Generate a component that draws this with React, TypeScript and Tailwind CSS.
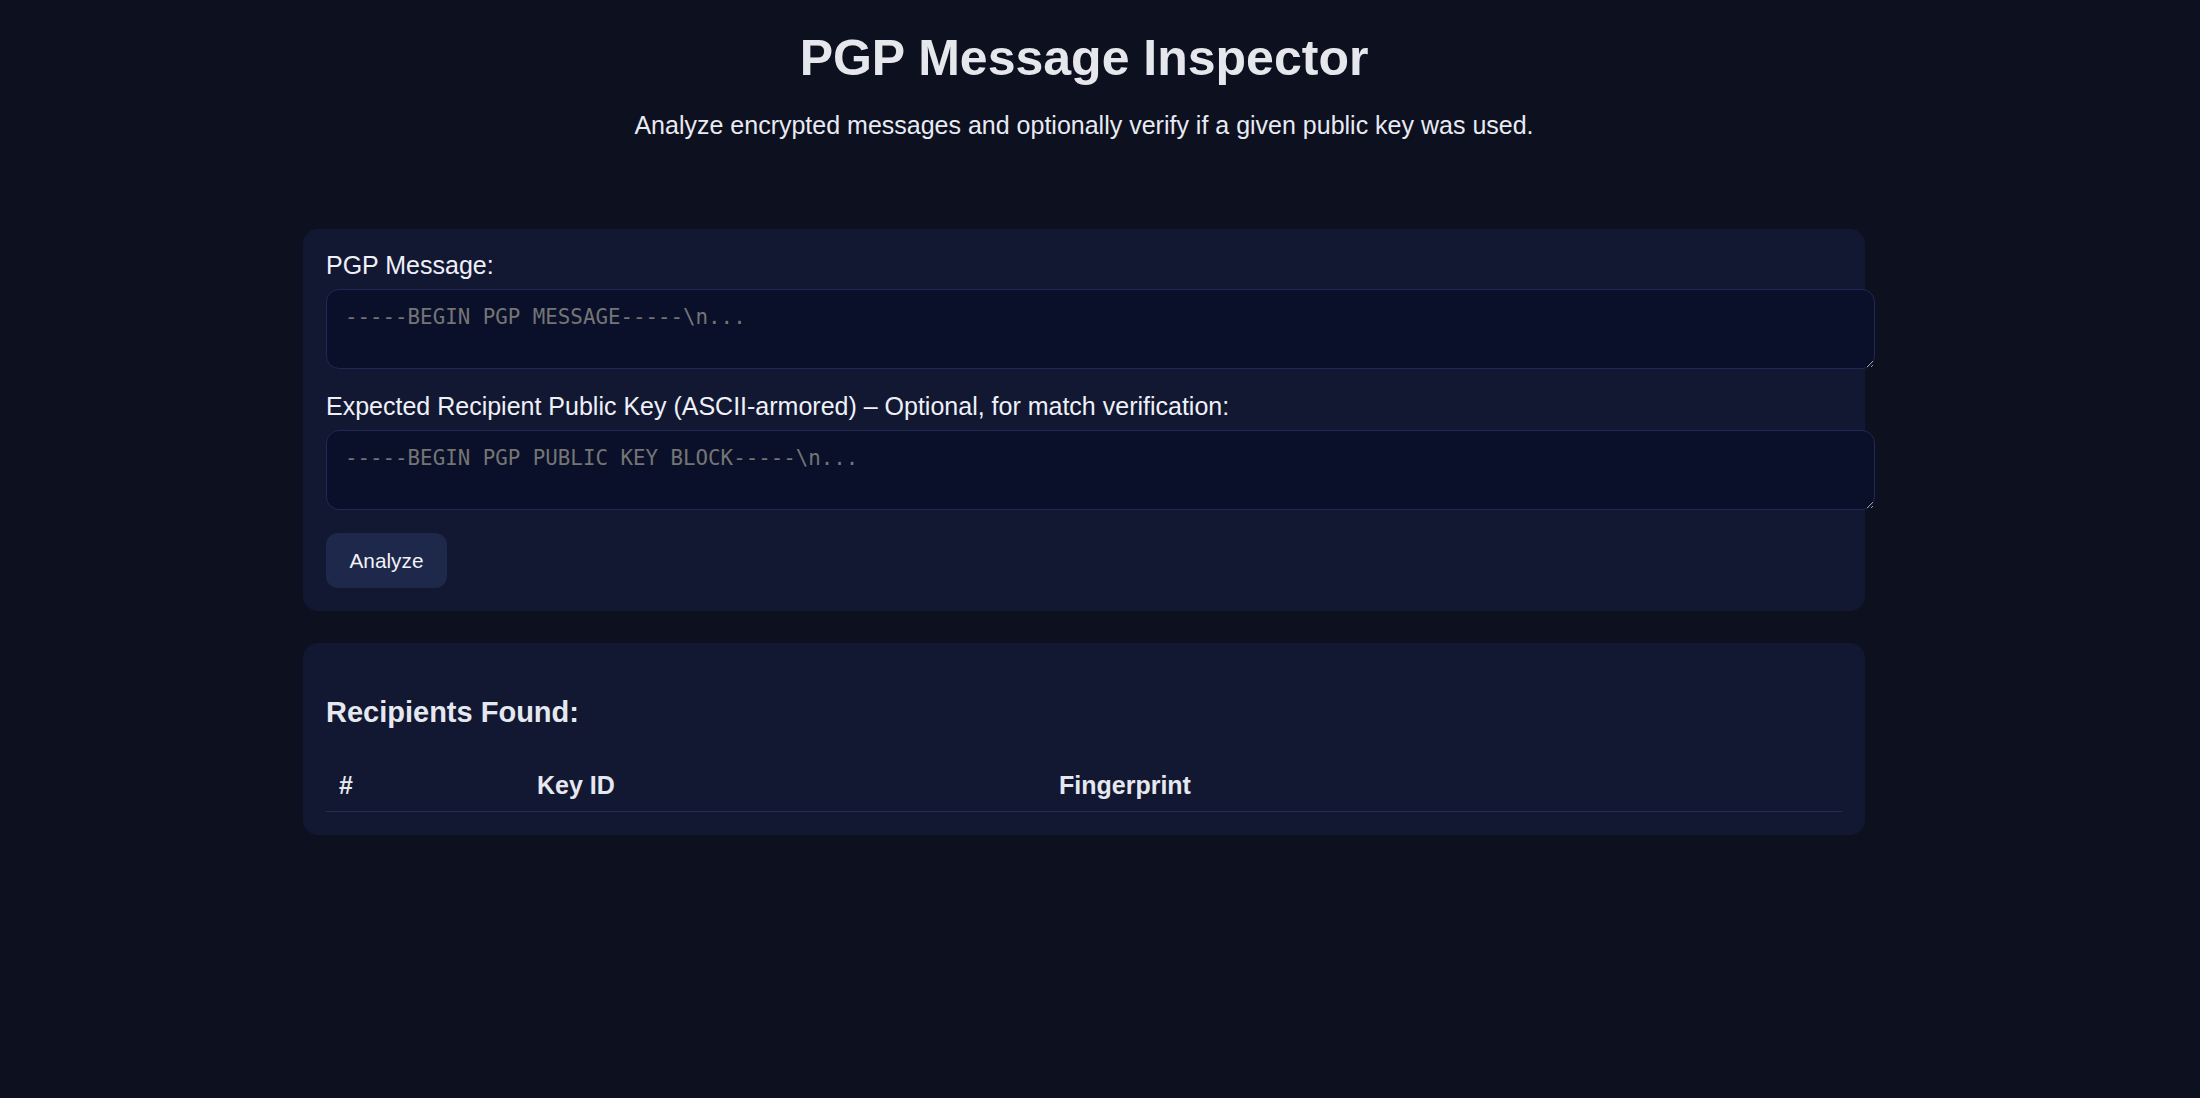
import React from "react";

export default function App() {
  return (
    <div className="min-h-screen bg-[#0d101e] font-['Liberation_Sans',Arial,sans-serif] text-[#e6e8f0]">
      <div className="ml-[303px] w-[1562px] pt-[30px] pb-10">
        <h1 className="text-center text-[50px] leading-[56px] font-bold text-[#e6e7ec]">
          PGP Message Inspector
        </h1>
        <p className="mt-[25px] text-center text-[25px] leading-[29px] text-[#e8eaf4]">
          Analyze encrypted messages and optionally verify if a given public key was used.
        </p>

        <div className="mt-[89px] rounded-[15px] bg-[#131832] px-[23px] pt-[22px] pb-[23px]">
          <label className="block text-[25px] leading-[29px] text-[#eef0f8]">PGP Message:</label>
          <textarea
            placeholder={"-----BEGIN PGP MESSAGE-----\\n..."}
            className="mt-[9px] block h-[80px] w-[1549px] rounded-[13px] border border-[#1f2952] bg-[#0b102a] pl-[18px] pr-[18px] pt-[15px] font-['DejaVu_Sans_Mono',monospace] text-[20.8px] leading-[24px] text-[#e6e8f0] placeholder:text-[#757575] outline-none"
          />
          <label className="mt-[23px] block text-[25px] leading-[29px] text-[#eef0f8]">
            Expected Recipient Public Key (ASCII-armored) – Optional, for match verification:
          </label>
          <textarea
            placeholder={"-----BEGIN PGP PUBLIC KEY BLOCK-----\\n..."}
            className="mt-[9px] block h-[80px] w-[1549px] rounded-[13px] border border-[#1f2952] bg-[#0b102a] pl-[18px] pr-[18px] pt-[15px] font-['DejaVu_Sans_Mono',monospace] text-[20.8px] leading-[24px] text-[#e6e8f0] placeholder:text-[#757575] outline-none"
          />
          <button className="mt-[23px] flex h-[55px] w-[121px] items-center justify-center rounded-[12px] bg-[#1e284b] text-[20.8px] text-[#f2f3f8]">
            Analyze
          </button>
        </div>

        <div className="mt-[32px] rounded-[15px] bg-[#131832] px-[23px] pt-[52px] pb-[23px]">
          <h3 className="text-[29px] leading-[34px] font-bold text-[#e6e8f0]">Recipients Found:</h3>
          <table className="mt-[30px] w-full border-collapse text-left">
            <thead>
              <tr className="border-b border-[#222c55]">
                <th className="w-[198px] px-[13px] pt-[12px] pb-[11px] text-[25px] leading-[29px] font-bold text-[#e6e8f0]">#</th>
                <th className="w-[522px] px-[13px] pt-[12px] pb-[11px] text-[25px] leading-[29px] font-bold text-[#e6e8f0]">Key ID</th>
                <th className="px-[13px] pt-[12px] pb-[11px] text-[25px] leading-[29px] font-bold text-[#e6e8f0]">Fingerprint</th>
              </tr>
            </thead>
            <tbody></tbody>
          </table>
        </div>
      </div>
    </div>
  );
}
